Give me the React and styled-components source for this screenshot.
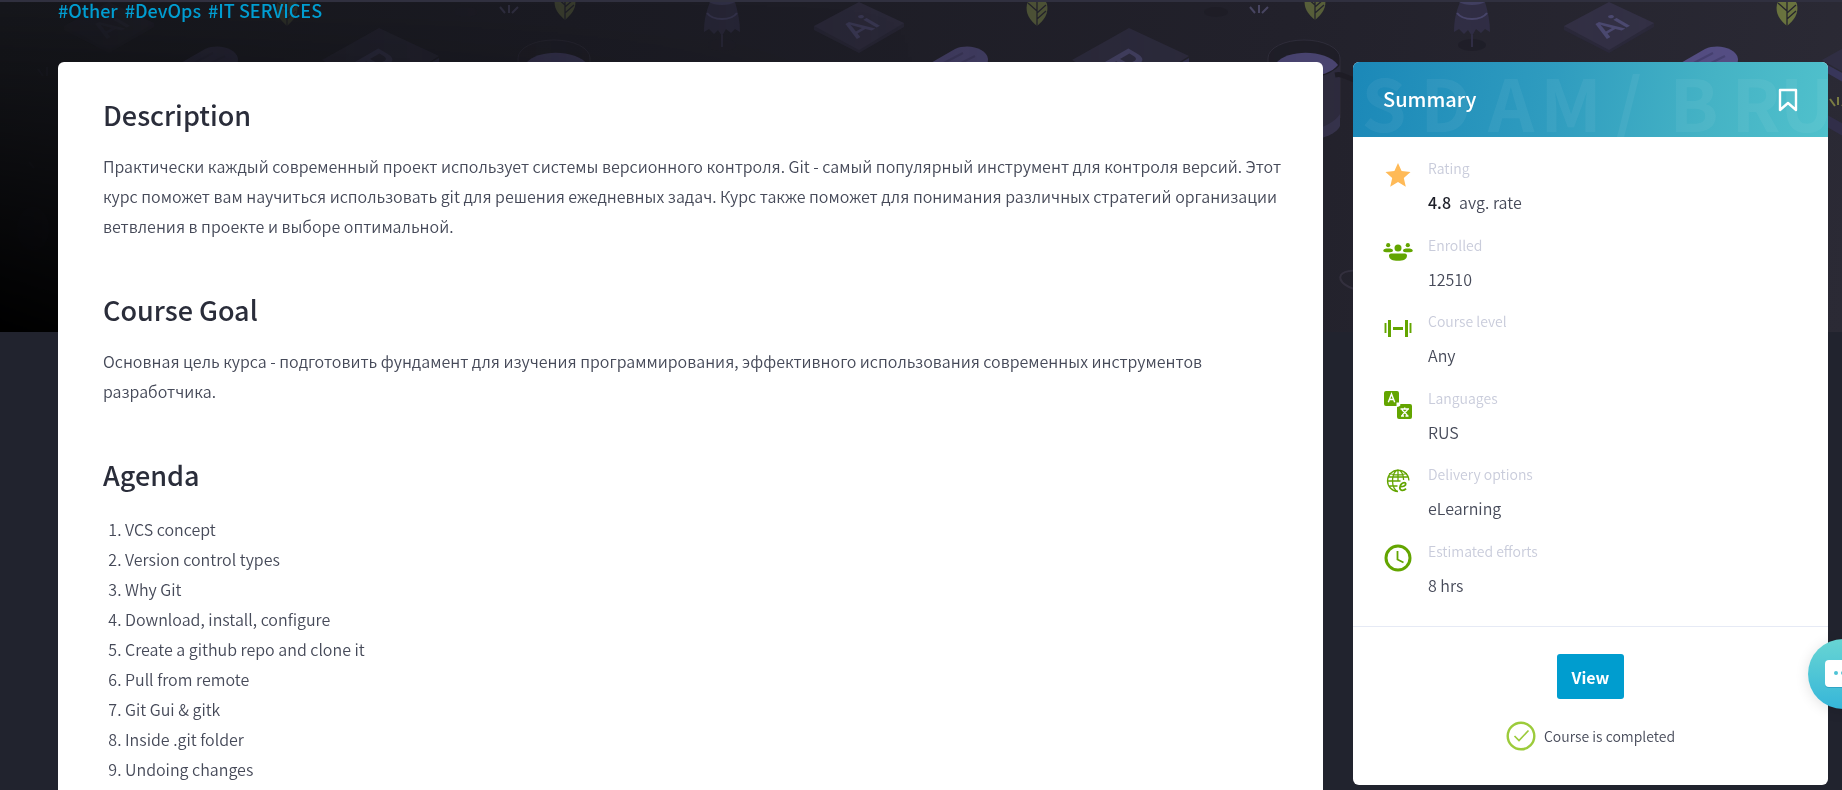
import React from "react";
import styled, { createGlobalStyle } from "styled-components";

const GlobalStyle = createGlobalStyle`
  *, *::before, *::after { box-sizing: border-box; }
  body {
    margin: 0;
    background: #21232e;
    color: #464a59;
    font-family: "Source Sans Pro", "Noto Sans CJK SC", "Noto Sans", sans-serif;
    font-size: 16px;
    font-weight: 350;
    line-height: 30px;
  }
`;

const Page = styled.div`
  position: relative;
  height: 100vh;
  overflow: hidden;
  border-top: 2px solid #30303f;
`;

const Hero = styled.div`
  position: absolute;
  top: 0;
  left: 0;
  right: 0;
  height: 330px;
  overflow: hidden;
  background: linear-gradient(100deg, #16171c 0%, #1b1b23 30%, #22212b 68%, #2b2a35 100%);

  &::after {
    content: "";
    position: absolute;
    inset: 0;
    background: linear-gradient(180deg, transparent, #000);
    mask-image: linear-gradient(90deg, #000, transparent 50%);
  }
`;

const HeroArt = styled.svg`
  display: block;
  width: 100%;
  height: 100%;
  mask-image: linear-gradient(90deg, rgba(0, 0, 0, 0.05), #000 1840px);
`;

const Content = styled.div`
  position: relative;
  padding: 0 14px 0 58px;
`;

const Tags = styled.nav`
  display: flex;
  gap: 7px;
  height: 60px;
  line-height: 16px;
`;

const Tag = styled.a`
  color: #009dd1;
  font-size: 18px;
  font-weight: 500;
  text-decoration: none;
`;

const Columns = styled.div`
  display: grid;
  grid-template-columns: minmax(0, 1fr) 475px;
  gap: 30px;
  align-items: start;
`;

const Article = styled.main`
  background: #fff;
  border-radius: 6px 6px 0 0;
  padding: 33px 30px 33px 45px;
`;

const Section = styled.section`
  margin-bottom: 49px;
`;

const Heading = styled.h2`
  margin: 0 0 16px;
  color: #2a2d3a;
  font-size: 27px;
  font-weight: 500;
  line-height: 40px;
`;

const Paragraph = styled.p`
  margin: 0;
`;

const Agenda = styled.ol`
  margin: 19px 0 0;
  padding-left: 22px;
`;

const Card = styled.aside`
  background: #fff;
  border-radius: 6px;
  overflow: hidden;
`;

const CardHeader = styled.header`
  position: relative;
  display: flex;
  align-items: center;
  justify-content: space-between;
  height: 75px;
  padding: 0 30px;
  color: #fff;
  background: linear-gradient(100deg, #1b88b8 0%, #2f9cbf 42%, #45b3c5 75%, #50c1cc 100%);
`;

const Watermark = styled.svg`
  position: absolute;
  inset: 0;
  width: 100%;
  height: 100%;
`;

const CardTitle = styled.h3`
  position: relative;
  margin: 0;
  padding-bottom: 2px;
  font-size: 20px;
  font-weight: 500;
`;

const IconButton = styled.button`
  position: relative;
  display: grid;
  place-items: center;
  width: 20px;
  height: 30px;
  padding: 0;
  border: 0;
  background: none;
  color: inherit;
`;

const Facts = styled.dl`
  display: flex;
  flex-direction: column;
  justify-content: space-between;
  min-height: 490px;
  margin: 0;
  padding: 21px 30px 26px;
  border-bottom: 1px solid #e6eaf5;
`;

const Fact = styled.div`
  display: grid;
  grid-template-columns: 30px 1fr;
  column-gap: 15px;

  > svg {
    grid-row: span 2;
    margin-top: 2px;
  }
`;

const FactLabel = styled.dt`
  color: #c9ccdb;
  font-size: 14px;
  line-height: 20px;
`;

const FactValue = styled.dd`
  margin: 9px 0 0;

  b {
    margin-right: 8px;
    color: #1d1f28;
    font-weight: 500;
  }
`;

const CardFooter = styled.footer`
  display: flex;
  flex-direction: column;
  align-items: center;
  gap: 22px;
  padding: 27px 30px 34px;
`;

const ViewButton = styled.button`
  height: 45px;
  padding: 0 15px;
  border: 0;
  border-radius: 3px;
  background: #009dcf;
  color: #fff;
  font: inherit;
  font-weight: 700;
`;

const Status = styled.p`
  display: flex;
  align-items: center;
  gap: 8px;
  margin: 0;
  font-size: 14px;
`;

const ChatButton = styled.button`
  position: fixed;
  top: 639px;
  right: -36px;
  display: grid;
  place-items: center;
  width: 70px;
  height: 70px;
  padding: 0;
  border: 0;
  border-radius: 50%;
  background: linear-gradient(180deg, #68d5d3, #36b6d9);
  box-shadow: 0 2px 14px rgba(0, 0, 0, 0.12);
`;

const green = "#63a500";

const StarIcon = () => (
  <svg width="30" height="30" viewBox="0 0 30 30" aria-hidden="true">
    <path fill="#ffba57" d="M15 3l3.600 8 8.900.9-6.700 6 2 8.800L15 22l-7.800 4.700 2-8.800-6.700-6 8.900-.9z" />
  </svg>
);

const PeopleIcon = () => (
  <svg width="30" height="30" viewBox="0 0 30 30" fill={green} aria-hidden="true">
    <circle cx="5.200" cy="8.200" r="2.100" />
    <circle cx="24.800" cy="8.200" r="2.100" />
    <circle cx="15" cy="11" r="3.500" />
    <path d="M.2 13.800c0-1.800 2-2.300 5-2.300 2.800 0 4.800.5 4.800 2s-2 1.800-4.800 1.800-5 0-5-1.500zM20 13.500c0-1.500 2-2 4.800-2 3 0 5 .5 5 2.300 0 1.500-2 1.500-5 1.500S20 15 20 13.500zM6 18.500C6 17 7.500 16.500 9 16.500h12c1.500 0 3 .5 3 2 0 4-3.500 5.200-9 5.200s-9-1.200-9-5.200z" />
  </svg>
);

const DumbbellIcon = () => (
  <svg width="30" height="30" viewBox="0 0 30 30" fill={green} aria-hidden="true">
    <path d="M5 7h3v17H5zM22 7h3v17h-3zM2 10h1v10H2zM27 10h1v10h-1zM10 14h10v3H10z" />
    <path opacity=".45" d="M1 10h1v10H1zM28 10h1v10h-1zM3 10h1v10H3zM26 10h1v10h-1z" />
  </svg>
);

const LanguagesIcon = () => (
  <svg width="30" height="30" viewBox="0 0 30 30" fill="none" aria-hidden="true">
    <path fill={green} d="M3 1h11a2 2 0 0 1 2 2v9.500h-2.500V16H3a2 2 0 0 1-2-2V3a2 2 0 0 1 2-2z" />
    <path fill={green} d="M16 16.500a2 2 0 0 0 1.300-2.500H27a2 2 0 0 1 2 2v11a2 2 0 0 1-2 2H16a2 2 0 0 1-2-2V17z" />
    <path stroke="#fff" strokeWidth="1.400" d="M5.300 12.300 8.500 4l3.200 8.300M6.300 9.500h4.400M17.500 19h8.500M21.700 17.500V19M18.800 19c.2 2.500 5.500 4.500 5.700 7M24.700 19c-.2 2.500-5.500 4.500-5.700 7M18 26h3M22.500 26h3" />
  </svg>
);

const GlobeIcon = () => (
  <svg width="30" height="30" viewBox="0 0 30 30" fill="none" stroke={green} strokeWidth="1.300" aria-hidden="true">
    <path d="M15 25.500A10.700 10.700 0 1 1 25.900 14.500M15 3.800V15M15 25.500c-3-.5-5.500-5-5.500-10.800S12 4 15 4s5.500 4 5.600 10M5 11h20M4.500 15h13M5.500 20h9M6 7.500c5 1.500 13 1.500 18 0" />
    <path strokeWidth="1.800" d="M16.500 20.500c4 .3 6.500-.8 6.200-2.800-.2-1.500-2.500-1.500-4.200.2-2.200 2.200-2.500 6 .5 6.500 1.500.2 3-.5 4-1.700" />
  </svg>
);

const ClockIcon = () => (
  <svg width="30" height="30" viewBox="0 0 30 30" fill="none" stroke={green} aria-hidden="true">
    <circle cx="15" cy="15" r="12" strokeWidth="3" />
    <path strokeWidth="1.800" d="M14.500 8v8.500l6 3" />
  </svg>
);

const BookmarkIcon = () => (
  <svg width="20" height="24" viewBox="0 0 20 24" fill="none" stroke="#fff" strokeWidth="2.400" strokeLinejoin="round" aria-hidden="true">
    <path d="M2 2h16v20l-8-7-8 7z" />
  </svg>
);

const CheckIcon = () => (
  <svg width="30" height="30" viewBox="0 0 30 30" fill="none" stroke="#9ccb3b" strokeWidth="2.400" aria-hidden="true">
    <circle cx="15" cy="15" r="13.300" />
    <path strokeWidth="1.700" d="M8.500 15l4.500 4.500L22.500 9.500" />
  </svg>
);

const ChatIcon = () => (
  <svg width="36" height="30" viewBox="0 0 36 30" aria-hidden="true">
    <rect x="0" y="2" width="36" height="27" rx="4" fill="#2fa4c5" />
    <rect x="0" y="1" width="36" height="27" rx="4" fill="#fff" />
    <g fill="#4dc3d6">
      <circle cx="11" cy="14" r="2" />
      <circle cx="18" cy="14" r="2" />
      <circle cx="25" cy="14" r="2" />
    </g>
  </svg>
);

const Leaf = ({ x, y }) => (
  <g transform={`translate(${x} ${y})`}>
    <path fill="#6b753f" d="M0 25c-7-6-12-12-10-22l2-4H8l2 4c2 10-3 16-10 22z" />
    <path stroke="#24232d" strokeWidth="1.300" fill="none" d="M0 0v25M0 12l9-8M0 18l9-8M0 10l-9-8" />
  </g>
);

const tileStarts = [-750, 0, 750, 1500];

const HeroPattern = () => (
  <HeroArt aria-hidden="true">
    <defs>
      <g id="tile">
        <path fill="#33304a" d="M-41 0h26c3 10 5 20 5 30l-5-3-4 4-5-4-4 7-4-6-4 4-5-5-5 3c0-12 2-20 6-30z" />
        <path stroke="#504d78" strokeWidth="2" fill="none" d="M-43 11c6 8 24 8 30 0" />
        <path fill="#48466d" d="M-41 0h26c-6 4-20 4-26 0z" />
        <ellipse cx="-28" cy="43" rx="14" ry="6" fill="#1e1d27" />
        <path stroke="#33304a" strokeWidth="2" d="M-28 33v12" />
        <path fill="#2b293b" d="M64 24v4l45 23 45-26v-4z" />
        <path fill="#343147" d="M64 24l45-24 45 21-45 27z" />
        <text transform="matrix(.87 -.5 .87 .5 107 37)" fontFamily="Lato, sans-serif" fontSize="30" fontWeight="700" fill="#504d78">Ai</text>
        <path fill="#575088" d="M172 66l33-19c14-6 32 0 33 10 0 12-14 20-28 26h-50z" />
        <path stroke="#484274" strokeWidth="2" fill="none" d="M188 64l25-13M205 64l20-10" />
        <Leaf x={287} y={-1} />
        <path fill="#302e43" d="M322 58l57-32 60 28-8 5-52 32z" />
        <path fill="#38365a" d="M322 60v8l57 33v-10zM439 56v7l-60 38v-10z" />
        <text transform="matrix(.87 .5 -.87 .5 349 60)" fontFamily="Lato, sans-serif" fontSize="42" fontWeight="700" fill="#504d78">Ps</text>
        <ellipse cx="466" cy="10" rx="12" ry="5" fill="#1d1c25" />
        <path stroke="#585579" strokeWidth="2" d="M500 5l5 6M509 3v8M518 5l-6 6" />
        <Leaf x={565} y={-7} />
        <path stroke="#33313f" fill="#1e1d26" d="M518 56a36 18 0 0 1 72 0v60c-8 16-64 20-72 0z" />
        <path fill="#575088" d="M526 61c12-14 50-14 62 2-12 15-50 16-62-2z" />
        <path fill="#312e43" d="M525 65c15 16 50 15 65-2v53c-6 17-60 24-72 0z" />
        <path fill="#3c3856" d="M518 120c15 16 60 11 72-8v12c-8 18-64 20-72 0z" />
        <path stroke="#1c1b23" strokeWidth="5" fill="none" d="M585 73c10-2 10 4 34 10" />
        <path stroke="#383544" strokeWidth="2" fill="none" d="M620 290c-25-2-32-12-29-17s20-6 29-2M620 285c-10-2-10-10 0-11" />
        <path stroke="#7a7c43" strokeWidth="2" d="M330 97l5 7M338 95v8M348 96l-6 8" />
        <path fill="#312e49" d="M322 110l57 32 61-32v12l-61 33-57-33z" />
        <circle cx="347" cy="333" r="6" fill="#b7b3e6" />
        <ellipse cx="33" cy="227" rx="16" ry="22" fill="#33314a" />
        <path stroke="#48466d" strokeWidth="2" d="M38 67l5 7M47 65v9M29 160l5 6" />
      </g>
    </defs>
    {tileStarts.map((x) => (
      <use key={x} href="#tile" x={x} />
    ))}
  </HeroArt>
);

const watermarkLetters = [
  ["S", 31], ["D", 93], ["A", 158], ["M", 218], ["/", 275], ["B", 341], ["R", 403], ["U", 454],
];

const facts = [
  { icon: StarIcon, label: "Rating", value: <><b>4.8</b>avg. rate</> },
  { icon: PeopleIcon, label: "Enrolled", value: "12510" },
  { icon: DumbbellIcon, label: "Course level", value: "Any" },
  { icon: LanguagesIcon, label: "Languages", value: "RUS" },
  { icon: GlobeIcon, label: "Delivery options", value: "eLearning" },
  { icon: ClockIcon, label: "Estimated efforts", value: "8 hrs" },
];

const agenda = [
  "VCS concept",
  "Version control types",
  "Why Git",
  "Download, install, configure",
  "Create a github repo and clone it",
  "Pull from remote",
  "Git Gui & gitk",
  "Inside .git folder",
  "Undoing changes",
];

export default function App() {
  return (
    <Page>
      <GlobalStyle />
      <Hero>
        <HeroPattern />
      </Hero>
      <Content>
        <Tags aria-label="Course tags">
          {["#Other", "#DevOps", "#IT SERVICES"].map((tag) => (
            <Tag key={tag} href="#tag">{tag}</Tag>
          ))}
        </Tags>
        <Columns>
          <Article>
            <Section>
              <Heading>Description</Heading>
              <Paragraph>
                Практически каждый современный проект использует системы версионного контроля. Git - самый популярный инструмент для контроля версий. Этот курс поможет вам научиться использовать git для решения ежедневных задач. Курс также поможет для понимания различных стратегий организации ветвления в проекте и выборе оптимальной.
              </Paragraph>
            </Section>
            <Section>
              <Heading>Course Goal</Heading>
              <Paragraph>
                Основная цель курса - подготовить фундамент для изучения программирования, эффективного использования современных инструментов разработчика.
              </Paragraph>
            </Section>
            <Section>
              <Heading>Agenda</Heading>
              <Agenda>
                {agenda.map((item) => (
                  <li key={item}>{item}</li>
                ))}
              </Agenda>
            </Section>
          </Article>
          <Card>
            <CardHeader>
              <Watermark aria-hidden="true">
                <g fill="#fff" opacity="0.05" fontFamily="'Noto Sans CJK SC', sans-serif" fontSize="72" fontWeight="700" textAnchor="middle">
                  {watermarkLetters.map(([letter, x]) => (
                    <text key={x} x={x} y="70">{letter}</text>
                  ))}
                </g>
              </Watermark>
              <CardTitle>Summary</CardTitle>
              <IconButton type="button" aria-label="Bookmark">
                <BookmarkIcon />
              </IconButton>
            </CardHeader>
            <Facts>
              {facts.map(({ icon: Icon, label, value }) => (
                <Fact key={label}>
                  <Icon />
                  <FactLabel>{label}</FactLabel>
                  <FactValue>{value}</FactValue>
                </Fact>
              ))}
            </Facts>
            <CardFooter>
              <ViewButton type="button">View</ViewButton>
              <Status>
                <CheckIcon />
                Course is completed
              </Status>
            </CardFooter>
          </Card>
        </Columns>
      </Content>
      <ChatButton type="button" aria-label="Open chat">
        <ChatIcon />
      </ChatButton>
    </Page>
  );
}
